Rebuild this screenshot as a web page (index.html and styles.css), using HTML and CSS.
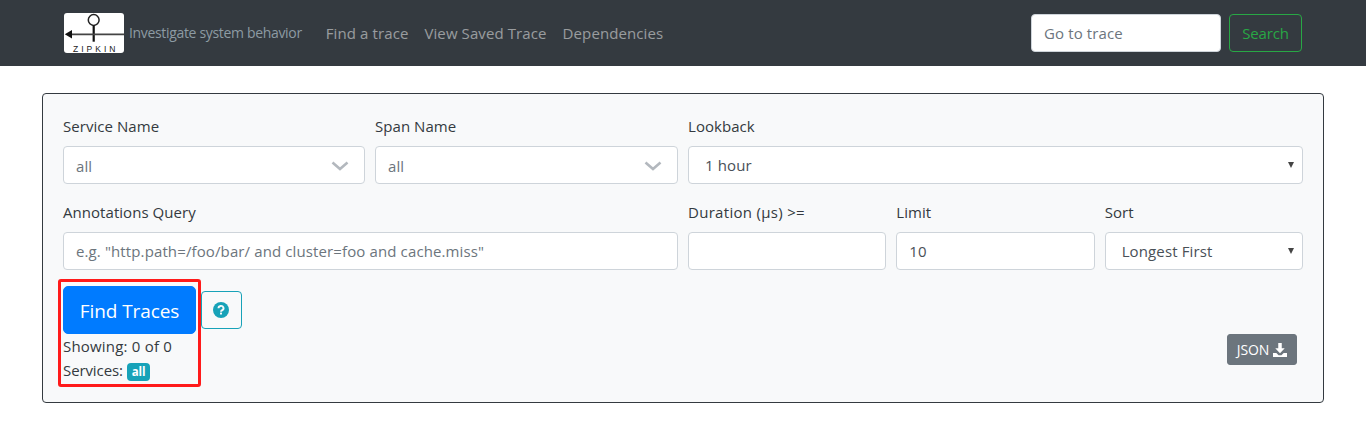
FILE: index.html
```html
<!DOCTYPE html>
<html lang="en">
<head>
<meta charset="utf-8">
<title>Zipkin</title>
<link rel="stylesheet" href="styles.css">
</head>
<body>
<nav class="navbar">
  <a class="brand" href="#">
    <svg class="logo" width="60" height="40" viewBox="0 0 60 40" aria-label="Zipkin">
      <rect width="60" height="40" rx="3" fill="#fff"/>
      <circle cx="29.7" cy="7" r="5.4" fill="none" stroke="#222" stroke-width="1.5"/>
      <path d="M29.7 12.5V28.7" stroke="#111" stroke-width="2.2" fill="none"/>
      <path d="M5 21.3H60" stroke="#444" stroke-width="1.8" fill="none"/>
      <path d="M0.8 21.3L8 17V25.6Z" fill="#111"/>
      <text class="logo-text" x="9" y="39">ZIPKIN</text>
    </svg>
    <span class="tagline">Investigate system behavior</span>
  </a>
  <ul class="nav-links">
    <li><a href="#">Find a trace</a></li>
    <li><a href="#">View Saved Trace</a></li>
    <li><a href="#">Dependencies</a></li>
  </ul>
  <form class="nav-search">
    <input class="field nav-input" type="text" placeholder="Go to trace">
    <button class="btn-search" type="button">Search</button>
  </form>
</nav>
<main class="page">
  <section class="panel">
    <div class="row-top">
      <div class="group">
        <label>Service Name</label>
        <div class="field combo"><span>all</span><svg class="chev" width="18" height="10" viewBox="0 0 18 10"><path d="M1.5 1.5L9 8L16.5 1.5" fill="none" stroke="#b3b8be" stroke-width="2.6"/></svg></div>
      </div>
      <div class="group">
        <label>Span Name</label>
        <div class="field combo"><span>all</span><svg class="chev" width="18" height="10" viewBox="0 0 18 10"><path d="M1.5 1.5L9 8L16.5 1.5" fill="none" stroke="#b3b8be" stroke-width="2.6"/></svg></div>
      </div>
      <div class="group">
        <label>Lookback</label>
        <div class="field pick"><span>1 hour</span><i class="caret"></i></div>
      </div>
    </div>
    <div class="row-bottom">
      <div class="group">
        <label>Annotations Query</label>
        <input class="field" type="text" placeholder="e.g. &quot;http.path=/foo/bar/ and cluster=foo and cache.miss&quot;">
      </div>
      <div class="row-third">
        <div class="group">
          <label class="label-wide">Duration (μs) &gt;=</label>
          <input class="field" type="text">
        </div>
        <div class="group">
          <label>Limit</label>
          <input class="field" type="text" value="10">
        </div>
        <div class="group">
          <label>Sort</label>
          <div class="field pick"><span>Longest First</span><i class="caret"></i></div>
        </div>
      </div>
    </div>
    <div class="actions">
      <div class="actions-left">
        <div class="find-row">
          <button class="btn-find" type="button">Find Traces</button>
          <button class="btn-help" type="button" aria-label="Help">
            <svg width="16" height="16" viewBox="0 0 16 16"><circle cx="8" cy="8" r="8" fill="#17a2b8"/><path d="M5.5 6.3a2.5 2.3 0 1 1 3.8 1.9c-.9.5-1.3.9-1.3 1.5" fill="none" stroke="#f8f9fa" stroke-width="1.9"/><rect x="7" y="10.6" width="2" height="2" rx=".4" fill="#f8f9fa"/></svg>
          </button>
        </div>
        <div class="line line-count">Showing: 0 of 0</div>
        <div class="line line-services">Services: <span class="badge">all</span></div>
        <div class="highlight"></div>
      </div>
      <button class="btn-json" type="button">JSON
        <svg width="14" height="14" viewBox="0 0 16 16"><path d="M6 0h4v6h3.4L8 11.6 2.6 6H6z" fill="#fff"/><path d="M0 11.4h3.8L6.4 14h3.2l2.6-2.6H16V16H0z" fill="#fff"/></svg>
      </button>
    </div>
  </section>
</main>
</body>
</html>
```
FILE: styles.css
```css
* { box-sizing: border-box; }
html, body { margin: 0; padding: 0; }
body {
  font-family: "Open Sans", "Noto Sans", sans-serif;
  font-size: 15px;
  line-height: 24px;
  color: #212529;
  background: #fff;
}
.navbar {
  height: 66px;
  background: #343a40;
  display: flex;
  align-items: center;
  padding: 0 64px;
}
.brand {
  display: flex;
  align-items: center;
  text-decoration: none;
}
.logo { display: block; flex: none; }
.logo-text {
  font-family: "Liberation Sans", sans-serif;
  font-size: 8.5px;
  letter-spacing: 3px;
  fill: #222;
}
.tagline {
  margin-left: 5px;
  margin-top: -1px;
  font-size: 14px;
  letter-spacing: -0.33px;
  color: #8d9ba3;
}
.nav-links {
  display: flex;
  list-style: none;
  margin: 0 0 0 24px;
  padding: 0;
  gap: 16px;
}
.nav-links a {
  color: rgba(255, 255, 255, 0.5);
  text-decoration: none;
  letter-spacing: 0.1px;
}
.nav-search {
  margin-left: auto;
  display: flex;
  gap: 8px;
}
.field {
  display: block;
  width: 100%;
  height: 38px;
  padding: 0 12px;
  background: #fff;
  border: 1px solid #ced4da;
  border-radius: 4px;
  color: #495057;
  font: inherit;
  letter-spacing: 0.12px;
}
.field::placeholder { color: #6c757d; opacity: 1; }
.nav-input { width: 190px; }
.btn-search {
  height: 38px;
  width: 73px;
  padding: 0;
  background: transparent;
  border: 1px solid #28a745;
  border-radius: 4px;
  color: #28a745;
  font: inherit;
  letter-spacing: -0.2px;
}
.page { padding: 27px 42px 0; }
.panel {
  height: 310px;
  padding: 20px;
  background: #f8f9fa;
  border: 1px solid #343a40;
  border-radius: 4px;
}
.row-top {
  display: grid;
  grid-template-columns: 302px 303px 1fr;
  gap: 10px;
}
.row-bottom {
  display: grid;
  grid-template-columns: 1fr 1fr;
  gap: 10px;
  margin-top: 16px;
}
.row-third {
  display: grid;
  grid-template-columns: repeat(3, 1fr);
  gap: 10px;
}
.group label {
  display: block;
  height: 24px;
  margin-bottom: 8px;
  letter-spacing: 0.05px;
  color: #343a40;
}
.group .label-wide { letter-spacing: 0.3px; }
.combo, .pick {
  display: flex;
  align-items: center;
  justify-content: space-between;
}
.combo { color: #6c757d; padding: 1px 15px 0 12px; }
.pick { padding: 0 8px 0 16px; }
.caret {
  width: 0;
  height: 0;
  border-left: 3.5px solid transparent;
  border-right: 3.5px solid transparent;
  border-top: 6px solid #444;
}
.actions {
  display: flex;
  justify-content: space-between;
  align-items: flex-end;
  margin-top: 16px;
  padding-right: 6px;
}
.actions-left {
  position: relative;
}
.find-row {
  display: flex;
  align-items: center;
  gap: 5px;
}
.btn-find {
  width: 133px;
  height: 48px;
  padding: 1px 0 0;
  background: #007bff;
  border: 1px solid #007bff;
  border-radius: 5px;
  color: #fff;
  font: inherit;
  font-size: 19px;
  letter-spacing: -0.1px;
}
.btn-help {
  width: 41px;
  height: 38px;
  padding: 0 1px 0 0;
  background: transparent;
  border: 1px solid #17a2b8;
  border-radius: 4px;
  display: flex;
  align-items: center;
  justify-content: center;
}
.btn-help svg { display: block; }
.line { color: #343a40; }
.line-count { letter-spacing: 0.2px; }
.line-services { letter-spacing: -0.1px; }
.badge {
  display: inline-block;
  height: 18px;
  padding: 0 5px;
  background: #17a2b8;
  border-radius: 4px;
  color: #fff;
  font-size: 11.5px;
  font-weight: 700;
  line-height: 18px;
}
.highlight {
  position: absolute;
  left: -5px;
  top: -7px;
  width: 143px;
  height: 108px;
  border: 3px solid #ff1a1a;
  border-radius: 3px;
  pointer-events: none;
}
.btn-json {
  display: flex;
  align-items: center;
  justify-content: center;
  gap: 4px;
  width: 70px;
  height: 31px;
  margin-bottom: 17px;
  padding: 0;
  background: #6c757d;
  border: 1px solid #6c757d;
  border-radius: 3px;
  color: #fff;
  font: inherit;
  font-size: 14px;
  letter-spacing: -0.15px;
}
```
